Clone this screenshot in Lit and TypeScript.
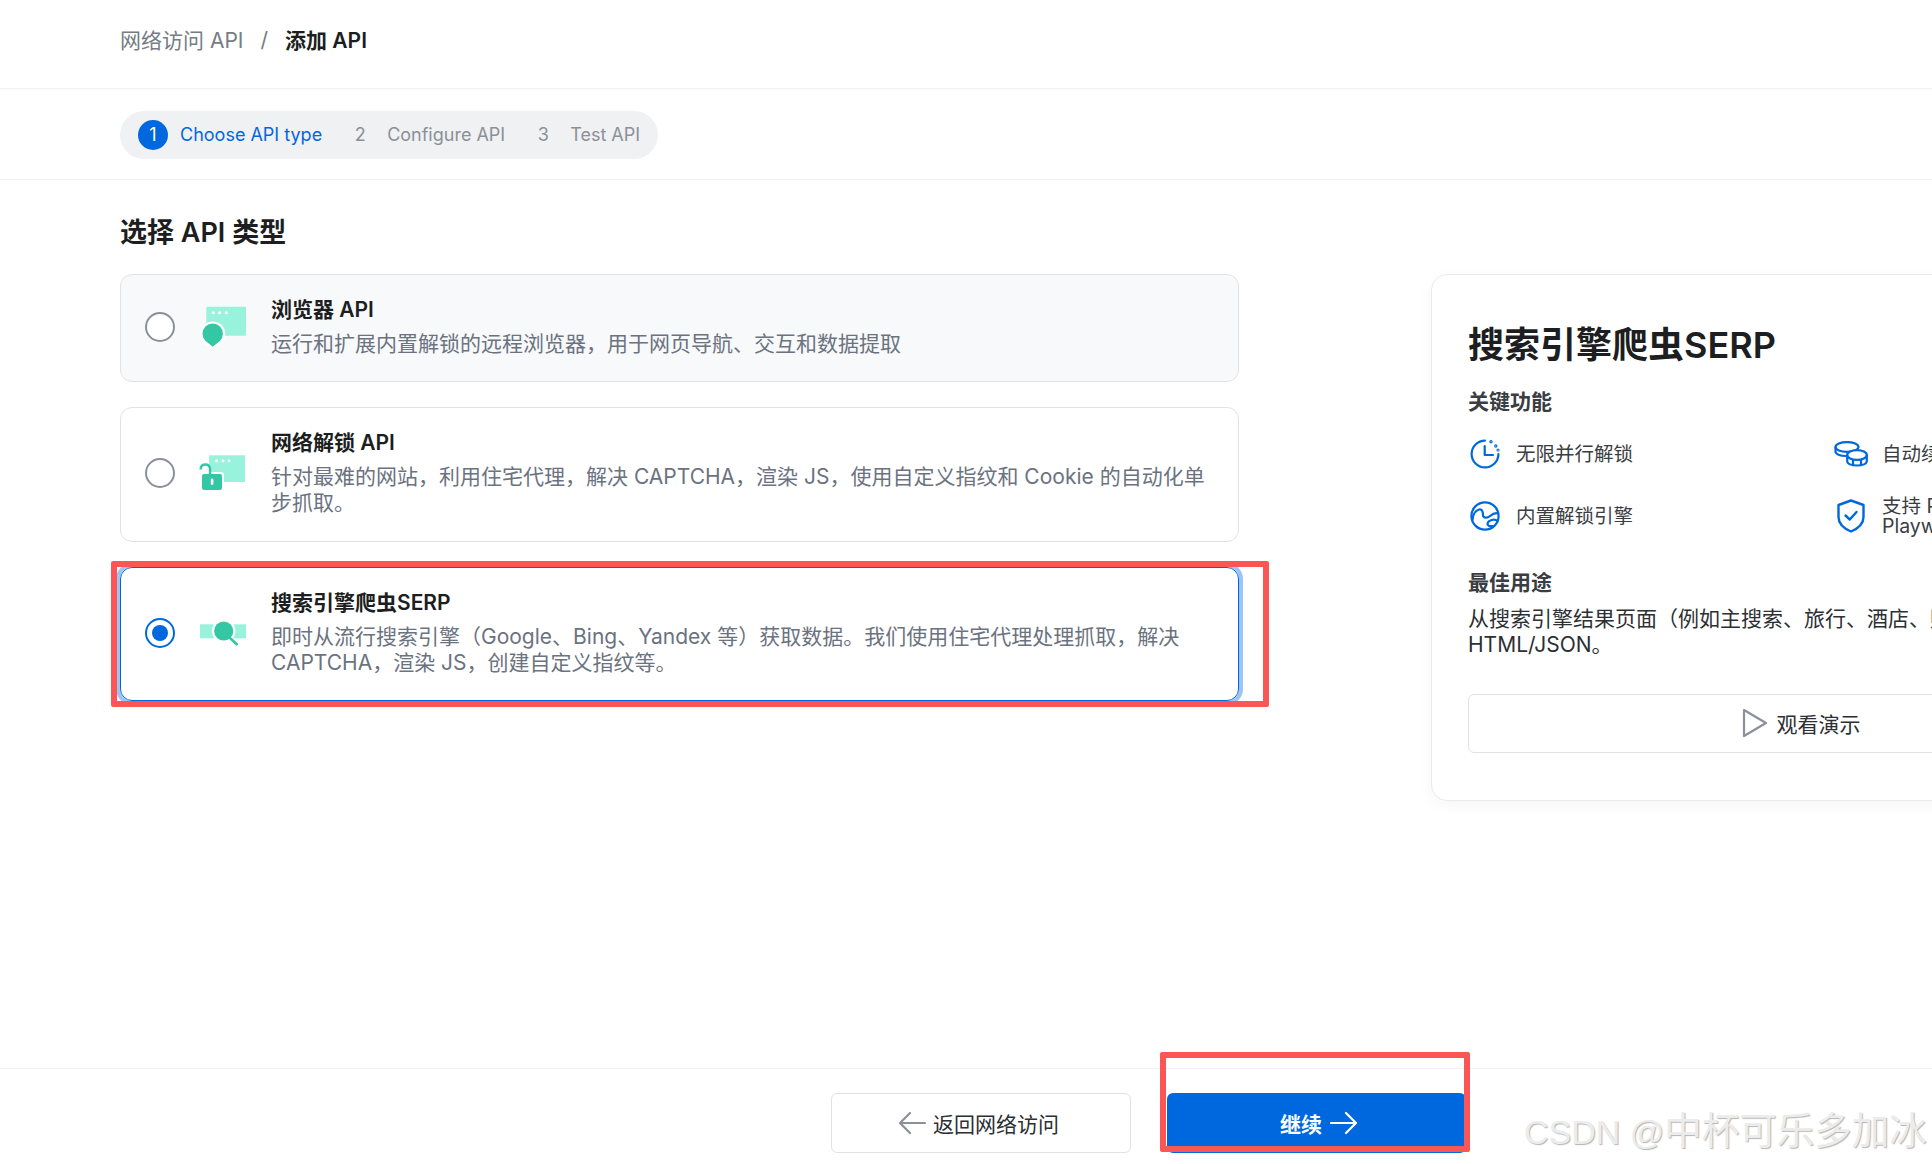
import { LitElement, html, css } from 'lit'
import { customElement, state } from 'lit/decorators.js'

const browserIcon = html`<svg width="48" height="44" viewBox="0 0 48 44">
  <rect x="7.3" y="1.7" width="39.7" height="29" rx="1" fill="#99f2dc" />
  <circle cx="14.3" cy="7.7" r="1.5" fill="#fff" />
  <circle cx="20.7" cy="7.7" r="1.5" fill="#fff" />
  <circle cx="27.3" cy="7.7" r="1.5" fill="#fff" />
  <circle cx="13.7" cy="29" r="12.6" fill="#fff" />
  <path d="M13.7 41.7 6.6 36A10.2 10.2 0 1 1 20.8 36Z" fill="#34c7a4" />
</svg>`

const unlockIcon = html`<svg width="48" height="38" viewBox="0 0 48 38">
  <rect x="10" y="1.3" width="36" height="26.7" fill="#99f2dc" />
  <circle cx="17.7" cy="6.7" r="1.5" fill="#fff" />
  <circle cx="24" cy="6.7" r="1.5" fill="#fff" />
  <circle cx="30" cy="6.7" r="1.5" fill="#fff" />
  <rect x="1" y="18" width="24" height="20" rx="3" fill="#fff" />
  <path d="M1.7 15.5V14.5A4.7 4.7 0 0 1 11 14.5V20" fill="none" stroke="#34c7a4" stroke-width="2.4" />
  <rect x="3" y="20" width="20" height="16" rx="2" fill="#34c7a4" />
  <rect x="11.8" y="24.5" width="2.6" height="6.5" rx="1.3" fill="#fff" />
</svg>`

const serpIcon = html`<svg width="48" height="28" viewBox="0 0 48 28">
  <rect x="1" y="5.3" width="46" height="14" fill="#99f2dc" />
  <circle cx="24.7" cy="12" r="11.8" fill="#fff" />
  <path d="M31 19 37.7 25.3" stroke="#34c7a4" stroke-width="2.6" stroke-linecap="round" />
  <circle cx="24.7" cy="12" r="9.6" fill="#34c7a4" />
</svg>`

const clockIcon = html`<svg width="30" height="30" viewBox="0 0 30 30" fill="none" stroke="#0068de" stroke-width="2.2" stroke-linecap="round" stroke-linejoin="round">
  <path d="M15 1.6A13.4 13.4 0 1 0 28.4 15" />
  <path d="M14.7 7V16H23" />
  <circle cx="21" cy="2.8" r=".6" />
  <circle cx="25.8" cy="7" r=".6" />
  <circle cx="28" cy="11" r=".5" />
</svg>`

const engineIcon = html`<svg width="30" height="30" viewBox="0 0 30 30" fill="none" stroke="#0068de" stroke-width="2.2" stroke-linecap="round" stroke-linejoin="round">
  <circle cx="15" cy="15" r="13.6" />
  <path d="M2.5 19C3 13 5.5 9.5 9 8.500C12.5 7.5 13 12 13 14C13 17 17 17.500 20 15C22.500 13 25 11.500 28 12.500" />
  <path d="M27.5 20C24.500 17.500 18.500 19 17.500 22.500C17 24.500 19.500 25.500 22.500 25" />
</svg>`

const coinsIcon = html`<svg width="34" height="26" viewBox="0 0 34 26" fill="none" stroke="#0068de" stroke-width="2.2" stroke-linejoin="round">
  <ellipse cx="13" cy="6" rx="11.5" ry="4.8" />
  <path d="M1.5 6V10.5C1.5 13 6 15 12 15" />
  <ellipse cx="23" cy="14" rx="9.8" ry="4.8" fill="#fff" />
  <path d="M13.2 14V20C13.2 22.8 17.5 24.5 23 24.500S32.8 22.800 32.800 20V14" />
  <path d="M19 19V24M27 19V24" />
</svg>`

const shieldIcon = html`<svg width="28" height="34" viewBox="0 0 28 34" fill="none" stroke="#0068de" stroke-width="2.4" stroke-linecap="round" stroke-linejoin="round">
  <path d="M14 1.5 26.5 6V18C26.5 24.5 21 29.5 14 32.5C7 29.5 1.5 24.5 1.5 18V6Z" />
  <path d="M8.5 16.5 12.8 20.5 19.5 13" />
</svg>`

const arrowLeft = html`<svg width="28" height="24" viewBox="0 0 28 24" fill="none" stroke="#8a9199" stroke-width="2.2" stroke-linecap="round" stroke-linejoin="round">
  <path d="M27 12H2M12 2 2 12 12 22" />
</svg>`

const arrowRight = html`<svg width="28" height="24" viewBox="0 0 28 24" fill="none" stroke="#fff" stroke-width="2.2" stroke-linecap="round" stroke-linejoin="round">
  <path d="M1 12H26M16 2 26 12 16 22" />
</svg>`

const playIcon = html`<svg width="26" height="30" viewBox="0 0 26 30" fill="none" stroke="#8a9199" stroke-width="2.2" stroke-linejoin="round">
  <path d="M2 2 24 15 2 28Z" />
</svg>`

const steps = ['Choose API type', 'Configure API', 'Test API']

const apiTypes = [
  {
    title: '浏览器 API',
    desc: '运行和扩展内置解锁的远程浏览器，用于网页导航、交互和数据提取',
    icon: browserIcon,
    hover: true,
  },
  {
    title: '网络解锁 API',
    desc: '针对最难的网站，利用住宅代理，解决 CAPTCHA，渲染 JS，使用自定义指纹和 Cookie 的自动化单步抓取。',
    icon: unlockIcon,
  },
  {
    title: '搜索引擎爬虫SERP',
    desc: '即时从流行搜索引擎（Google、Bing、Yandex 等）获取数据。我们使用住宅代理处理抓取，解决 CAPTCHA，渲染 JS，创建自定义指纹等。',
    icon: serpIcon,
  },
]

@customElement('app-root')
export class AppRoot extends LitElement {
  static styles = css`
    :host {
      display: flex;
      flex-direction: column;
      position: relative;
      height: 1164px;
      overflow: hidden;
      background: white;
      color: #1c1e21;
      font-family: Inter, 'Noto Sans CJK SC', sans-serif;
      font-size: 21px;
    }

    .crumbs {
      display: flex;
      align-items: center;
      gap: 17px;
      height: 89px;
      box-sizing: border-box;
      padding: 0 0 10px 120px;
      border-bottom: 1px solid #f0f1f3;
      color: #767c84;
    }

    .crumbs b {
      font-weight: 600;
      color: #1c1e21;
    }

    .stepper-row {
      padding: 22px 0 20px 120px;
      border-bottom: 1px solid #f0f1f3;
    }

    .stepper {
      display: inline-flex;
      align-items: center;
      gap: 23px;
      height: 48px;
      box-sizing: border-box;
      padding: 0 18px 1px;
      border-radius: 24px;
      background: #f0f1f3;
      color: #8a9098;
      font-size: 18px;
    }

    .step {
      display: flex;
      align-items: center;
      gap: 12px;
    }

    .num {
      width: 30px;
      height: 30px;
      border-radius: 50%;
      display: flex;
      align-items: center;
      justify-content: center;
    }

    .step.active {
      color: #0068de;
    }

    .step.active .num {
      background: #0068de;
      color: white;
    }

    .content {
      flex: 1;
      display: flex;
      gap: 192px;
      padding: 37px 0 0 120px;
    }

    .left {
      width: 1119px;
      flex-shrink: 0;
    }

    h1 {
      margin: 0 0 25px;
      font-size: 27px;
      line-height: 32px;
      font-weight: 600;
    }

    .options {
      display: flex;
      flex-direction: column;
      gap: 25px;
    }

    .option {
      position: relative;
      display: flex;
      align-items: center;
      padding: 22px 30px 24px 24px;
      border: 1px solid #e0e2e6;
      border-radius: 12px;
    }

    .option:nth-child(2) {
      padding-bottom: 25px;
    }

    .option.hover {
      background: #f8f9fb;
    }

    .option.selected {
      border-color: #0068de;
      box-shadow: 0 0 0 4px #9cc4f5;
    }

    .radio {
      width: 30px;
      height: 30px;
      flex-shrink: 0;
      box-sizing: border-box;
      border: 2px solid #8a9098;
      border-radius: 50%;
      background: white;
      display: flex;
      align-items: center;
      justify-content: center;
    }

    .selected .radio {
      border: 2.5px solid #0068de;
    }

    .selected .radio::after {
      content: '';
      width: 16px;
      height: 16px;
      border-radius: 50%;
      background: #0068de;
    }

    .option-icon {
      width: 48px;
      margin: 0 24px 0 24px;
      flex-shrink: 0;
      display: flex;
    }

    .option-title {
      font-weight: 600;
      line-height: 26px;
      margin-bottom: 8px;
    }

    .option-desc {
      color: #6b7280;
      line-height: 26px;
    }

    .mark {
      position: absolute;
      box-sizing: border-box;
      border: 6px solid #fb5555;
      border-radius: 2px;
      pointer-events: none;
    }

    .mark.card {
      inset: -7px -31px -7px -10px;
    }

    .mark.next {
      inset: -41px -4px 1px -7px;
    }

    .detail {
      width: 740px;
      height: 527px;
      flex-shrink: 0;
      box-sizing: border-box;
      margin-top: 57px;
      padding: 48px 36px 0;
      border: 1px solid #e9eaec;
      border-radius: 16px;
      box-shadow: 0 4px 16px rgba(0, 0, 0, 0.04);
    }

    h2 {
      margin: 0;
      font-size: 36px;
      line-height: 44px;
      font-weight: 600;
    }

    h3 {
      margin: 21px 0 0;
      font-size: 21px;
      line-height: 28px;
      font-weight: 600;
      color: #3a3d42;
    }

    .features {
      display: grid;
      grid-template-columns: 366px 1fr;
      grid-auto-rows: 40px;
      row-gap: 22px;
      margin-top: 18px;
    }

    .feature {
      display: flex;
      align-items: center;
      font-size: 19.5px;
      line-height: 20px;
      color: #3a3d42;
      white-space: nowrap;
    }

    .feature-icon {
      width: 34px;
      margin-right: 14px;
      display: flex;
      justify-content: center;
    }

    .use h3 {
      margin-top: 33px;
    }

    .use p {
      margin: 9px 0 0;
      line-height: 26px;
      color: #2c2f33;
      white-space: nowrap;
    }

    .demo {
      display: flex;
      align-items: center;
      justify-content: center;
      gap: 9px;
      height: 59px;
      margin-top: 36px;
      padding-bottom: 2px;
      box-sizing: border-box;
      border: 1px solid #e0e2e6;
      border-radius: 6px;
      color: #2c2f33;
    }

    footer {
      display: flex;
      gap: 36px;
      padding: 24px 0 11px 831px;
      border-top: 1px solid #f0f1f3;
    }

    .btn {
      position: relative;
      width: 300px;
      height: 60px;
      box-sizing: border-box;
      display: flex;
      align-items: center;
      justify-content: center;
      gap: 7px;
      padding-right: 5px;
      border: 1px solid #e0e2e6;
      border-radius: 6px;
      color: #2c2f33;
    }

    .btn.primary {
      width: 299px;
      border: none;
      padding: 0 0 0 5px;
      gap: 8px;
      background: #0068de;
      color: white;
      font-weight: 600;
    }

    .watermark {
      position: absolute;
      left: 1524px;
      top: 1107px;
      font-family: 'Liberation Sans', 'Noto Sans CJK SC', sans-serif;
      font-size: 37.5px;
      line-height: 48px;
      color: #ececec;
      text-shadow: 1px 1px 1px #b4b4b4;
      white-space: nowrap;
    }

    .watermark span {
      font-size: 34px;
    }
  `

  @state() private selected = 2

  render() {
    return html`
      <nav class="crumbs">
        <span>网络访问 API</span>
        <span>/</span>
        <b>添加 API</b>
      </nav>

      <div class="stepper-row">
        <div class="stepper">
          ${steps.map((label, i) => html`
            <div class="step ${i === 0 ? 'active' : ''}">
              <span class="num">${i + 1}</span>
              <span>${label}</span>
            </div>
          `)}
        </div>
      </div>

      <div class="content">
        <section class="left">
          <h1>选择 API 类型</h1>
          <div class="options">
            ${apiTypes.map((t, i) => html`
              <div
                class="option ${t.hover ? 'hover' : ''} ${i === this.selected ? 'selected' : ''}"
                @click=${() => { this.selected = i }}
              >
                <span class="radio"></span>
                <span class="option-icon">${t.icon}</span>
                <div>
                  <div class="option-title">${t.title}</div>
                  <div class="option-desc">${t.desc}</div>
                </div>
                ${i === 2 ? html`<span class="mark card"></span>` : ''}
              </div>
            `)}
          </div>
        </section>

        <aside class="detail">
          <h2>搜索引擎爬虫SERP</h2>
          <h3>关键功能</h3>
          <div class="features">
            <div class="feature"><span class="feature-icon">${clockIcon}</span>无限并行解锁</div>
            <div class="feature"><span class="feature-icon">${coinsIcon}</span>自动续费</div>
            <div class="feature"><span class="feature-icon">${engineIcon}</span>内置解锁引擎</div>
            <div class="feature"><span class="feature-icon">${shieldIcon}</span><span>支持 Puppeteer、<br />Playwright</span></div>
          </div>
          <div class="use">
            <h3>最佳用途</h3>
            <p>从搜索引擎结果页面（例如主搜索、旅行、酒店、购物等）获取<br />HTML/JSON。</p>
          </div>
          <div class="demo">${playIcon}<span>观看演示</span></div>
        </aside>
      </div>

      <footer>
        <div class="btn">${arrowLeft}<span>返回网络访问</span></div>
        <div class="btn primary">
          <span>继续</span>${arrowRight}
          <span class="mark next"></span>
        </div>
      </footer>

      <div class="watermark"><span>CSDN @</span>中杯可乐多加冰</div>
    `
  }
}
